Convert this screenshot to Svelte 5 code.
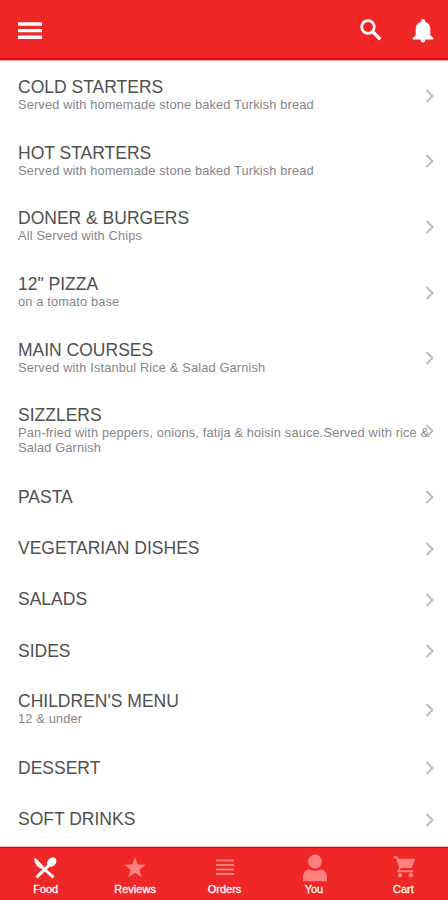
<script>
  const bread = 'Served with homemade stone baked Turkish bread'

  const categories = [
    { name: 'COLD STARTERS', note: bread },
    { name: 'HOT STARTERS', note: bread },
    { name: 'DONER & BURGERS', note: 'All Served with Chips' },
    { name: '12" PIZZA', note: 'on a tomato base' },
    { name: 'MAIN COURSES', note: 'Served with Istanbul Rice & Salad Garnish' },
    {
      name: 'SIZZLERS',
      note: 'Pan-fried with peppers, onions, fatija & hoisin sauce.Served with rice & Salad Garnish',
    },
    { name: 'PASTA' },
    { name: 'VEGETARIAN DISHES' },
    { name: 'SALADS' },
    { name: 'SIDES' },
    { name: "CHILDREN'S MENU", note: '12 & under' },
    { name: 'DESSERT' },
    { name: 'SOFT DRINKS' },
  ]

  const tabs = ['Food', 'Reviews', 'Orders', 'You', 'Cart']

  let active = 'Food'
</script>

<div class="app">
  <header>
    <button class="menu" aria-label="Menu">
      <svg width="24" height="18" viewBox="0 0 24 18">
        <path d="M0 2h24M0 8.6h24M0 15.2h24" stroke="currentColor" stroke-width="3.4" />
      </svg>
    </button>
    <button aria-label="Search">
      <svg width="22" height="22" viewBox="0 0 22 22" fill="none" stroke="currentColor">
        <circle cx="8" cy="8" r="6.3" stroke-width="2.7" />
        <path d="M12.6 12.6l7.6 7.6" stroke-width="3.4" />
      </svg>
    </button>
    <button class="bell" aria-label="Notifications">
      <svg width="22" height="26" viewBox="0 0 22 26" fill="currentColor">
        <path d="M11 1c-1.3 0-2 .9-2 2v.7C5.5 4.7 3.7 7.5 3.7 11v6.2L.7 20v1.6h20.6V20l-3-2.8V11c0-3.5-1.8-6.3-5.3-7.3V3c0-1.100-.7-2-2-2zM8.6 21.600a2.400 3 0 0 0 4.800 0z" />
      </svg>
    </button>
  </header>

  <main>
    {#each categories as category}
      <div class="row" class:noted={category.note}>
        <h2>{category.name}</h2>
        {#if category.note}
          <p>{category.note}</p>
        {/if}
        <svg class="chevron" width="10" height="14" viewBox="0 0 10 14">
          <path d="M1.5 1l6 6-6 6" fill="none" stroke="#bdbdbd" stroke-width="2" />
        </svg>
      </div>
    {/each}
  </main>

  <nav>
    {#each tabs as tab}
      <button class="tab" class:active={tab === active} on:click={() => (active = tab)}>
        <svg width="28" height="28" viewBox="0 0 28 28" fill="currentColor">
          {#if tab === 'Food'}
            <path d="M2.4 4.4c.7-.5 1.5 0 2.5.9l6.6 6.6-2.4 2.5c-1.5-.3-2.900-1.300-4.300-3C3.100 9.200 1.900 6.300 2.400 4.400z" />
            <path d="M9.500 12.500L21.500 23.300M4.400 23.300l13-12.500" stroke="currentColor" stroke-width="3" />
            <ellipse cx="19.7" cy="8.2" rx="4" ry="5.3" transform="rotate(47 19.7 8.2)" />
          {:else if tab === 'Reviews'}
            <path d="M14 3l2.7 7.5 8 .3-6.3 4.9 2.200 7.600-6.600-4.500-6.600 4.500 2.200-7.600-6.300-4.900 8-.3z" />
          {:else if tab === 'Orders'}
            <path d="M5 6.500h18M5 11h18M5 15.500h18M5 20h18" stroke="currentColor" stroke-width="2" />
          {:else if tab === 'You'}
            <circle cx="15" cy="7.6" r="7" />
            <path d="M3 27.3v-4C3 18.5 5.500 16 9 15.200c3.500 2 8.500 2 12 0 3.500.8 6 3.300 6 8.100v4z" />
          {:else}
            <path d="M4.500 2.300h4l1.200 2.500h16.500L22.700 14H11.800L11 16.300h13.300v1.900H8.200l1.800-4.600L6.900 4.300H4.500z" />
            <circle cx="11.1" cy="21.2" r="2.2" />
            <circle cx="21.8" cy="21.2" r="2.2" />
          {/if}
        </svg>
        <span>{tab}</span>
      </button>
    {/each}
  </nav>
</div>

<style>
  :global(body) {
    background: #fff;
    font-family: 'Liberation Sans', Arial, sans-serif;
  }

  .app {
    display: flex;
    flex-direction: column;
    height: 900px;
    overflow: hidden;
  }

  button {
    display: flex;
    padding: 0;
    border: none;
    background: none;
    color: #fff;
    font-family: inherit;
    cursor: pointer;
  }

  header {
    display: flex;
    align-items: center;
    flex: none;
    height: 60px;
    box-sizing: border-box;
    padding: 2px 14px 0 18px;
    background: #f02727;
    border-bottom: 2px solid #dc0d10;
    box-shadow: 0 1px 0 #f9a5a5;
  }

  .menu {
    margin-right: auto;
    margin-top: 2px;
  }

  .bell {
    margin-left: 30px;
    margin-top: 2px;
  }

  main {
    flex: 1;
    min-height: 0;
    padding-top: 2.9px;
  }

  .row {
    position: relative;
    padding: 16px 17px 15.8px 18px;
  }

  .noted {
    padding-top: 15.2px;
  }

  h2 {
    margin: 0;
    font-size: 17.5px;
    font-weight: 400;
    line-height: 19.5px;
    color: #505050;
  }

  p {
    margin: 0.4px 0 0;
    font-size: 12.8px;
    line-height: 14.8px;
    letter-spacing: 0.15px;
    color: #85858a;
  }

  /* long notes run underneath the arrow */
  .chevron {
    position: absolute;
    right: 13px;
    top: calc(50% - 7px);
  }

  nav {
    display: flex;
    flex: none;
    height: 53px;
    box-sizing: border-box;
    padding-left: 1px;
    background: #f02727;
    border-top: 1px solid #dc0d10;
    box-shadow: 0 -1px 0 #f0b8b8;
  }

  .tab {
    flex: 1;
    flex-direction: column;
    align-items: center;
    padding-top: 6px;
    color: #ff8080;
  }

  .tab.active {
    color: #fff;
  }

  .tab span {
    margin-top: 1px;
    font-size: 11px;
    line-height: 13px;
    color: #fff;
    -webkit-text-stroke: 0.3px #fff;
  }
</style>
